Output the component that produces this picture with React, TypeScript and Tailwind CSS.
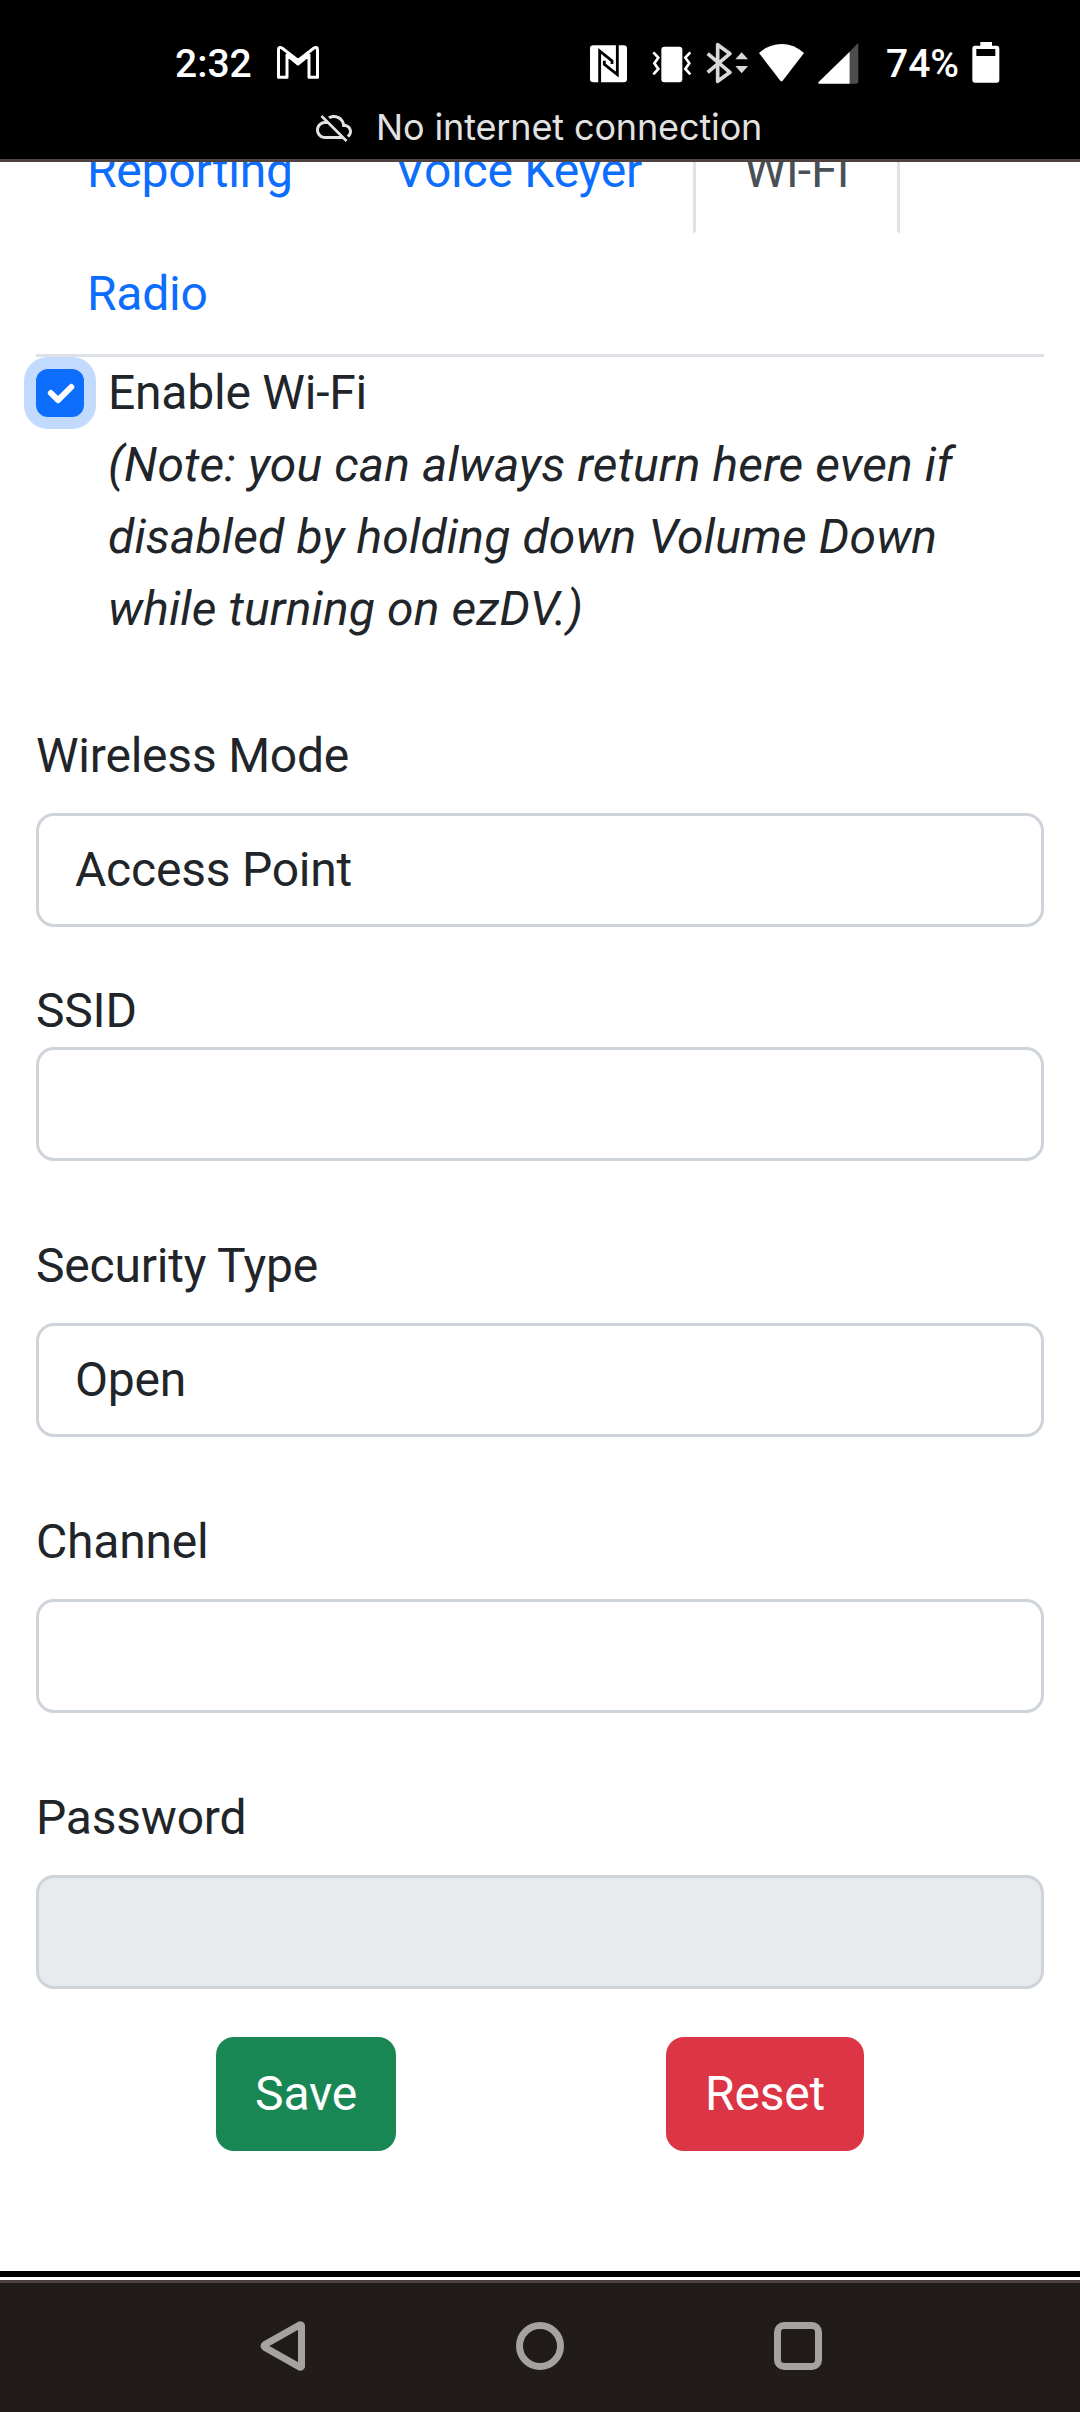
import type { ReactNode } from "react";

function GmailIcon() {
  return (
    <svg className="ml-[27px] mt-[6px] h-[34px] w-[42px]" viewBox="381 77 126 102" fill="none" stroke="#fff" strokeWidth="9" strokeLinejoin="round">
      <path d="M385.500 171V89Q385.500 78 396 83L444 120L492 83Q502.500 78 502.500 89V171H477V104L444 131L411 104V171Z" />
    </svg>
  );
}

function NfcIcon() {
  return (
    <svg className="mt-[5px] h-[38px] w-[38px]" viewBox="60 75 114 114">
      <rect x="60" y="76" width="111" height="111" rx="10" fill="#fff" />
      <path d="M89 188V93L126 123V132M142 75V164L103 133V122" fill="none" stroke="#000" strokeWidth="8.500" />
    </svg>
  );
}

function VibrateIcon() {
  return (
    <svg className="ml-[24px] mt-[6px] h-[37px] w-[40px]" viewBox="245 78 120 111">
      <rect x="273" y="80" width="63" height="107" rx="9" fill="#fff" />
      <path d="M249 97L264 113L252 130L264 147L249 163M360 97L345 113L357 130L345 147L360 163" fill="none" stroke="#fff" strokeWidth="8" />
    </svg>
  );
}

function BluetoothIcon() {
  return (
    <svg className="ml-[14px] mt-[2px] h-[42px] w-[43px]" viewBox="408 66 129 126">
      <path d="M413 101L480 157L443 184V74L480 101L413 157" fill="none" stroke="#d8d8d8" strokeWidth="11" strokeLinejoin="round" />
      <path d="M515 97L534 118H496ZM515 160L534 138H496Z" fill="#d8d8d8" />
    </svg>
  );
}

function WifiIcon() {
  return (
    <svg className="ml-[10px] mt-[4px] h-[38px] w-[45px]" viewBox="567 72 135 114">
      <path d="M567 99Q597 72 634.500 72Q672 72 702 99L638 182Q634.500 186 631 182Z" fill="#fff" />
    </svg>
  );
}

function CellIcon() {
  return (
    <svg className="ml-[14px] mt-[3px] h-[41px] w-[41px]" viewBox="743 70 123 123">
      <path d="M838 96L861 72Q864 70 864 74V186Q864 192 858 192H838Z" fill="#4d4d4d" />
      <path d="M838 96V192H747Q741 191 745 187Z" fill="#fff" />
    </svg>
  );
}

function BatteryIcon() {
  return (
    <svg className="ml-[13px] mt-[2px] h-[41px] w-[28px]" viewBox="1202 66 84 123">
      <path fillRule="evenodd" fill="#fff" d="M1227 66H1262V77H1276Q1284 77 1284 86V179Q1284 188 1276 188H1211Q1203 188 1203 179V86Q1203 77 1211 77H1227ZM1215 87V108H1272V87Z" />
    </svg>
  );
}

function StatusBar() {
  return (
    <header className="h-[162px] shrink-0 border-b-[3px] border-[#4e4241] bg-black pt-10">
      <div className="flex h-12 items-start pl-[175px] text-[39px] leading-[48px] font-medium text-white">
        <span className="w-[75px] whitespace-nowrap">2:32</span>
        <GmailIcon />
        <div className="ml-[271px] flex items-start">
          <NfcIcon />
          <VibrateIcon />
          <BluetoothIcon />
          <WifiIcon />
          <CellIcon />
          <span className="ml-[27px] w-[73px] whitespace-nowrap">74%</span>
          <BatteryIcon />
        </div>
      </div>
      <div className="mt-[15px] flex h-12 items-start pl-[316px] text-[#e2e2e2]">
        <svg className="mt-[6px] h-9 w-9" viewBox="0 0 24 24" fill="currentColor">
          <path d="M19.35 10.04C18.67 6.59 15.64 4 12 4c-1.480 0-2.850.43-4.010 1.170l1.460 1.460C10.210 6.230 11.080 6 12 6c3.040 0 5.500 2.460 5.500 5.500v.5H19c1.660 0 3 1.340 3 3 0 1.130-.64 2.110-1.560 2.620l1.450 1.450C23.160 18.160 24 16.680 24 15c0-2.640-2.050-4.780-4.650-4.960zM3 5.270l2.750 2.740C2.560 8.150 0 10.770 0 14c0 3.310 2.690 6 6 6h11.730l2 2L21 20.730 4.270 4 3 5.270zM7.730 10l8 8H6c-2.210 0-4-1.790-4-4s1.790-4 4-4h1.730z" />
        </svg>
        <span className="ml-[24px] font-['Inter'] text-[36px] leading-[48px] tracking-[-0.13px] whitespace-nowrap">No internet connection</span>
      </div>
    </header>
  );
}

function Tab({ active, children }: { active?: boolean; children: ReactNode }) {
  return (
    <a
      className={
        active
          ? "-mb-[3px] block rounded-t-[18px] border-[3px] border-[#dee2e6] border-b-white bg-white px-12 py-6 text-[#495057]"
          : "-mb-[3px] block border-[3px] border-transparent px-12 py-6 text-[#0d6efd]"
      }
    >
      {children}
    </a>
  );
}

function Field({ label, value, disabled, className, tight }: { label: string; value?: string; disabled?: boolean; className: string; tight?: boolean }) {
  return (
    <div className={className}>
      <label className="block">{label}</label>
      <div
        className={`h-[114px] rounded-[18px] border-[3px] border-[#ced4da] px-9 py-[18px] ${tight ? "" : "mt-[21px]"} ${disabled ? "bg-[#e8ebee]" : "bg-white"}`}
      >
        {value}
      </div>
    </div>
  );
}

function NavigationBar() {
  return (
    <footer className="h-[132px] shrink-0 border-t-[3px] border-[#4e4241] bg-[#211c1a]">
      <div className="flex items-start pt-[36px] pl-[258px]">
        <svg className="h-[54px] w-12" viewBox="0 0 48 54" fill="none" stroke="#a5a3a1" strokeWidth="7" strokeLinejoin="round">
          <path d="M43.500 6.500V47.500Q43 48.500 42 48.200L7 28.500Q5 27 7 25.500L42 5.800Q43 5.500 43.500 6.500Z" />
        </svg>
        <div className="mt-[3px] ml-[210px] size-12 rounded-full border-[7px] border-[#a5a3a1]" />
        <div className="mt-[3px] ml-[210px] size-12 rounded-[10px] border-[7px] border-[#a5a3a1]" />
      </div>
    </footer>
  );
}

export default function App() {
  return (
    <div className="flex h-[2412px] w-[1080px] flex-col overflow-hidden bg-white font-['Roboto',sans-serif] text-[48px] leading-[72px] text-[#212529]">
      <StatusBar />
      <main className="min-h-0 flex-1 overflow-hidden px-9 tracking-[-0.22px]">
        <nav className="-mt-[54px] flex flex-wrap border-b-[3px] border-[#dee2e6]">
          <Tab>Reporting</Tab>
          <Tab>Voice Keyer</Tab>
          <Tab active>Wi-Fi</Tab>
          <Tab>Radio</Tab>
        </nav>
        <div className="flex items-start gap-6">
          <span className="mt-3 flex size-12 shrink-0 rounded-xl bg-[#0d6efd] shadow-[0_0_0_12px_#c2dafe]">
            <svg className="size-12" viewBox="0 0 20 20" fill="none" stroke="#fff" strokeWidth="2.500" strokeLinecap="round" strokeLinejoin="round">
              <path d="m6.200 10 3 3 5.500-5.500" />
            </svg>
          </span>
          <p className="whitespace-nowrap">
            Enable Wi-Fi
            <em className="block tracking-[0.14px]">
              (Note: you can always return here even if
              <br />
              disabled by holding down Volume Down
              <br />
              while turning on ezDV.)
            </em>
          </p>
        </div>
        <Field className="mt-[75px]" label="Wireless Mode" value="Access Point" />
        <Field className="mt-12" label="SSID" tight />
        <Field className="mt-[69px]" label="Security Type" value="Open" />
        <Field className="mt-[69px]" label="Channel" />
        <Field className="mt-[69px]" label="Password" disabled />
        <div className="mt-12 flex gap-[270px] pl-[180px] text-white">
          <button className="h-[114px] w-[180px] rounded-[18px] bg-[#198754]">Save</button>
          <button className="h-[114px] w-[198px] rounded-[18px] bg-[#dc3545]">Reset</button>
        </div>
      </main>
      <div className="mb-[3px] h-[6px] shrink-0 bg-black" />
      <NavigationBar />
    </div>
  );
}
